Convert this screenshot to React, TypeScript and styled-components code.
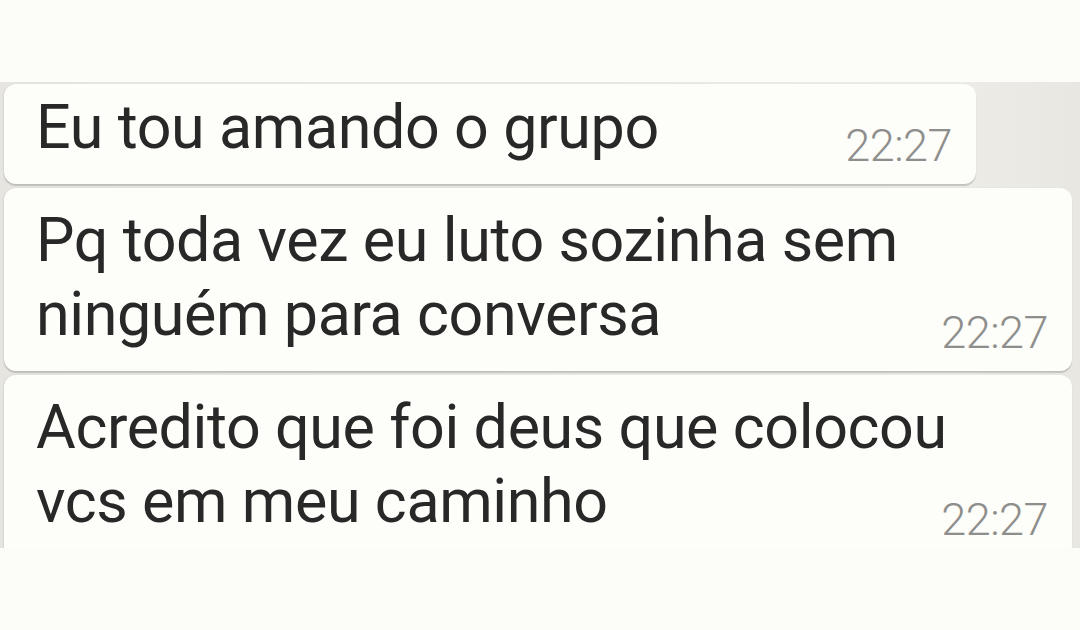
import styled, { createGlobalStyle } from "styled-components";

const GlobalStyle = createGlobalStyle`
  body {
    margin: 0;
    background: #fcfcf8;
    font-family: Roboto, "Noto Sans", "Liberation Sans", sans-serif;
  }
`;

const Page = styled.div`
  width: 1080px;
  height: 630px;
  padding-top: 82px;
  box-sizing: border-box;
  background: #fcfcf8;
  overflow: hidden;
`;

const ChatArea = styled.div`
  height: 466px;
  display: flex;
  flex-direction: column;
  gap: 4px;
  padding: 2px 0 0 4px;
  box-sizing: border-box;
  background: linear-gradient(90deg, #e6e5e0 0%, #ecebe6 90%, #e9e7e1 100%);
  overflow: hidden;
`;

interface BubbleProps {
  $width: number;
  $top: number;
}

const Bubble = styled.div<BubbleProps>`
  width: ${({ $width }) => $width}px;
  flex-shrink: 0;
  display: flex;
  justify-content: space-between;
  align-items: flex-end;
  box-sizing: border-box;
  padding: ${({ $top }) => $top}px 24px 20px 32px;
  background: #fdfdf9;
  border-radius: 12px;
  box-shadow: 0 2px 1px rgba(0, 0, 0, 0.16), -1px 0 2px rgba(0, 0, 0, 0.06);
`;

const Text = styled.div`
  font-size: 61px;
  line-height: 74px;
  letter-spacing: -0.4px;
  color: #282828;
  white-space: pre;
  min-width: 0;
`;

const Time = styled.span`
  font-size: 45px;
  line-height: 45px;
  font-weight: 300;
  color: #8e8e8c;
  margin-bottom: -4px;
  letter-spacing: -0.5px;
  flex-shrink: 0;
`;

const messages = [
  { text: "Eu tou amando o grupo", time: "22:27", width: 972, top: 6 },
  {
    text: "Pq toda vez eu luto sozinha sem\nninguém para conversa",
    time: "22:27",
    width: 1068,
    top: 15,
  },
  {
    text: "Acredito que foi deus que colocou\nvcs em meu caminho",
    time: "22:27",
    width: 1068,
    top: 15,
  },
];

export default function App() {
  return (
    <Page>
      <GlobalStyle />
      <ChatArea>
        {messages.map((m, i) => (
          <Bubble key={i} $width={m.width} $top={m.top}>
            <Text>{m.text}</Text>
            <Time>{m.time}</Time>
          </Bubble>
        ))}
      </ChatArea>
    </Page>
  );
}
